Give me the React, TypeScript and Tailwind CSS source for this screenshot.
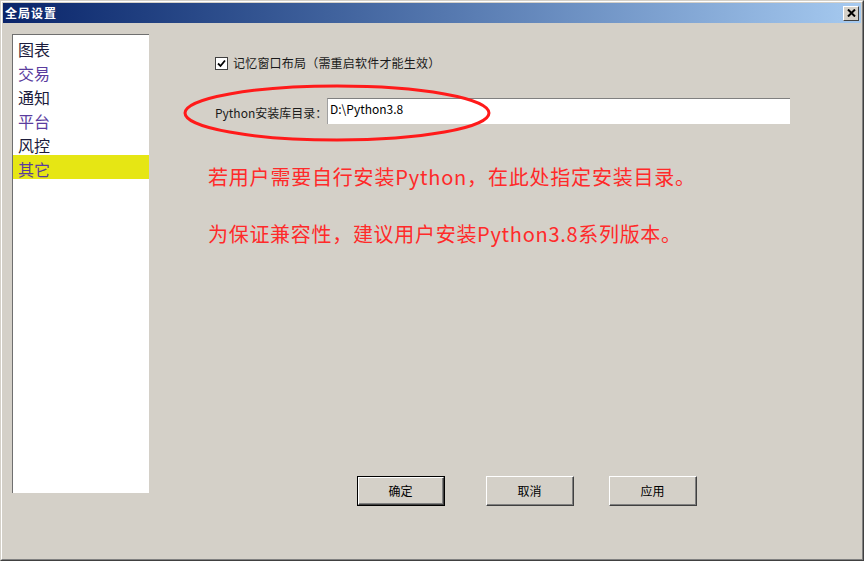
import React from 'react';

const font = { fontFamily: '"Noto Sans CJK SC", "Liberation Sans", sans-serif' };

const navItems = [
  { label: '图表', tone: 'text-[#1c1c3c]' },
  { label: '交易', tone: 'text-[#5a3c9e]' },
  { label: '通知', tone: 'text-[#1c1c3c]' },
  { label: '平台', tone: 'text-[#5a3c9e]' },
  { label: '风控', tone: 'text-[#1c1c3c]' },
  { label: '其它', tone: 'text-[#5a3c9e]', active: true },
];

function ClassicButton({ label, isDefault = false, className = '' }: { label: string; isDefault?: boolean; className?: string }) {
  const face = (
    <div className="flex h-full w-full items-center justify-center border-t border-l border-b border-r border-t-white border-l-white border-b-[#404040] border-r-[#404040] bg-[#d4d0c8]">
      <div className="flex h-full w-full items-center justify-center border-b border-r border-b-[#808080] border-r-[#808080] text-[12px] text-black">
        {label}
      </div>
    </div>
  );
  return (
    <div className={`h-[30px] w-[88px] ${isDefault ? 'border border-black' : ''} ${className}`}>{face}</div>
  );
}

export default function App() {
  return (
    <div style={font} className="h-[561px] w-[864px] bg-[#d4d0c8]">
      <div className="flex h-full w-full flex-col border-t border-l border-b border-r border-t-[#d4d0c8] border-l-[#d4d0c8] border-b-[#404040] border-r-[#404040]">
        <div className="flex h-full w-full flex-col border-t border-l border-b border-r border-t-white border-l-white border-b-[#808080] border-r-[#808080] p-px">
          {/* Title bar */}
          <div className="flex h-[20px] shrink-0 items-center justify-between bg-gradient-to-r from-[#0a246a] to-[#a6caf0] pl-[2px] pr-[2px]">
            <span className="text-[12px] font-bold leading-none tracking-[1px] text-white">全局设置</span>
            <div className="flex h-[15px] w-[16px] items-center justify-center border-t border-l border-b border-r border-t-white border-l-white border-b-[#404040] border-r-[#404040] bg-[#d4d0c8]">
              <svg width="9" height="8" viewBox="0 0 9 8">
                <path d="M1 0.5 L8 7.5 M8 0.5 L1 7.5" stroke="#000" strokeWidth="2" />
              </svg>
            </div>
          </div>

          {/* Body */}
          <div className="relative flex flex-1">
            {/* Category list */}
            <div className="ml-[9px] mt-[11px] flex h-[459px] w-[137px] shrink-0 flex-col border-t border-l border-t-[#6f6f6f] border-l-[#6f6f6f] bg-white">
              {navItems.map((item) => (
                <div
                  key={item.label}
                  className={`flex h-[24px] items-center pl-[5px] pt-[3px] text-[16px] ${item.tone} ${item.active ? 'bg-[#e6e614]' : ''}`}
                >
                  {item.label}
                </div>
              ))}
            </div>

            {/* Settings panel */}
            <div className="flex flex-1 flex-col pl-[59px]">
              <div className="ml-[7px] mt-[31px] flex items-center gap-[5px]">
                <div className="flex h-[13px] w-[13px] items-center justify-center border border-[#404040] bg-white">
                  <svg width="9" height="9" viewBox="0 0 9 9">
                    <path d="M1 4.5 L3.5 7 L8 1.5" stroke="#000" strokeWidth="1.8" fill="none" />
                  </svg>
                </div>
                <span className="text-[12px] tracking-[0.2px] text-[#1a1a1a]">记忆窗口布局（需重启软件才能生效）</span>
              </div>

              <div className="ml-[7px] mt-[26px] flex items-start">
                <span className="mt-[6px] w-[112px] shrink-0 whitespace-nowrap text-[12px] text-[#1a1a1a]">Python安装库目录：</span>
                <div className="h-[26px] w-[463px] shrink-0 border-t border-l border-t-[#808080] border-l-[#a0a0a0] bg-white pl-[2px] pt-[1px] text-[12px] text-black">
                  D:\Python3.8
                </div>
              </div>

              <div className="mt-[39px] whitespace-nowrap text-[20px] leading-[28px] tracking-[0.8px] text-[#ff2a2a]">
                若用户需要自行安装Python，在此处指定安装目录。
              </div>
              <div className="mt-[29px] whitespace-nowrap text-[20px] leading-[28px] tracking-[0.7px] text-[#ff2a2a]">
                为保证兼容性，建议用户安装Python3.8系列版本。
              </div>

              <div className="mt-auto mb-[52px] flex">
                <ClassicButton label="确定" isDefault className="ml-[149px]" />
                <ClassicButton label="取消" className="ml-[41px]" />
                <ClassicButton label="应用" className="ml-[35px]" />
              </div>
            </div>

            {/* Red annotation ellipse */}
            <svg className="pointer-events-none absolute left-[179px] top-[61px]" width="310" height="58" viewBox="0 0 310 58">
              <ellipse cx="155" cy="29" rx="152" ry="27" fill="none" stroke="#ff1a1a" strokeWidth="3" />
            </svg>
          </div>
        </div>
      </div>
    </div>
  );
}
